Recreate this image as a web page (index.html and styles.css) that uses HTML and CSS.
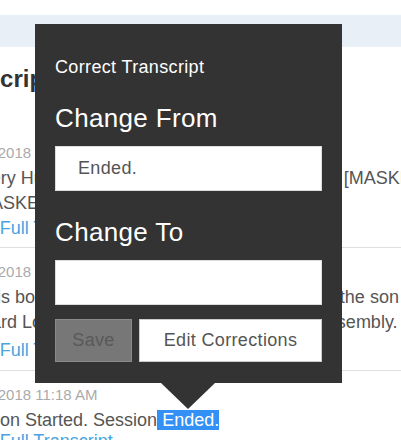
FILE: index.html
```html
<!DOCTYPE html>
<html lang="en">
<head>
<meta charset="utf-8">
<title>Correct Transcript</title>
<link rel="stylesheet" href="styles.css">
</head>
<body>
<div class="topband"></div>
<main class="page">
  <h1 class="title">Transcript</h1>
  <section class="entry">
    <div class="date">03/14/2018 11:02 AM</div>
    <p class="text">I, Avery Hughes, welcome the guests from Paris [MASKED] and thank<br>a [MASKED] guest.</p>
    <a class="link" href="#">View Full Transcript</a>
  </section>
  <section class="entry">
    <div class="date">03/14/2018 11:10 AM</div>
    <p class="text">As this board is proud to welcome Gregory, and the son of<br>Edward Lowe, member of the Texas General Assembly.</p>
    <a class="link" href="#">View Full Transcript</a>
  </section>
  <section class="entry">
    <div class="date">03/14/2018 11:18 AM</div>
    <p class="text">Session Started. Session<span class="hl"> Ended.</span></p>
    <a class="link" href="#">View Full Transcript</a>
  </section>
</main>

<div class="popover">
  <div class="pop-title">Correct Transcript</div>
  <h2 class="pop-label">Change From</h2>
  <input class="field" type="text" value="Ended.">
  <h2 class="pop-label">Change To</h2>
  <input class="field" type="text" value="">
  <div class="actions">
    <button class="btn btn-save" type="button">Save</button>
    <button class="btn btn-edit" type="button">Edit Corrections</button>
  </div>
</div>
</body>
</html>
```

FILE: styles.css
```css
* {
  box-sizing: border-box;
}

html,
body {
  margin: 0;
  padding: 0;
}

body {
  position: relative;
  width: 401px;
  height: 440px;
  overflow: hidden;
  background: #fff;
  color: #555;
  font-family: "Liberation Sans", Arial, sans-serif;
}

.topband {
  height: 32px;
  margin-top: 15px;
  background: #e8eff7;
}

.page {
  width: 540px;
  margin-left: -64px;
}

.title {
  margin: 17px 0 30px;
  font-size: 24px;
  line-height: 30px;
  font-weight: bold;
  color: #333;
}

.entry {
  border-top: 1px solid #e0e0e0;
  padding: 14px 20px 7px;
}

.entry:first-of-type {
  border-top-color: transparent;
  padding-top: 18px;
  padding-bottom: 6px;
}

.date {
  font-size: 15px;
  line-height: 20px;
  color: #aaa;
}

.text {
  margin: 3px 0 0;
  font-size: 18px;
  line-height: 25px;
  white-space: nowrap;
}

.link {
  display: block;
  margin-top: 3px;
  font-size: 18px;
  line-height: 25px;
  color: #4aa3e0;
  text-decoration: none;
}

.entry:first-of-type .link {
  margin-top: 0;
}

.entry:last-of-type .link {
  margin-top: -4px;
}

.hl {
  background: #3390f5;
  color: #fff;
}

.popover {
  position: absolute;
  left: 35px;
  top: 24px;
  width: 307px;
  padding: 33px 20px 21px;
  background: #333;
  color: #fff;
  letter-spacing: 0.35px;
}

.popover::after {
  content: "";
  position: absolute;
  left: 126px;
  top: 100%;
  border-left: 27px solid transparent;
  border-right: 27px solid transparent;
  border-top: 26px solid #333;
}

.pop-title {
  font-size: 18px;
  line-height: 20px;
}

.pop-label {
  margin: 26px 0 13px;
  font-size: 26px;
  line-height: 30px;
  font-weight: normal;
}

.field {
  display: block;
  width: 100%;
  height: 45px;
  margin: 0;
  padding: 0 22px;
  border: 1px solid #ddd;
  background: #fff;
  color: #555;
  font-family: inherit;
  font-size: 18px;
  letter-spacing: inherit;
  outline: none;
}

.actions {
  display: flex;
  gap: 7px;
  margin-top: 14px;
}

.btn {
  height: 43px;
  margin: 0;
  padding: 0;
  border: 1px solid #ccc;
  background: #fff;
  color: #555;
  font-family: inherit;
  font-size: 18px;
  letter-spacing: inherit;
}

.btn-save {
  width: 77px;
  background: #777;
  border-color: #8a8a8a;
  color: #595959;
}

.btn-edit {
  flex: 1;
}
```
